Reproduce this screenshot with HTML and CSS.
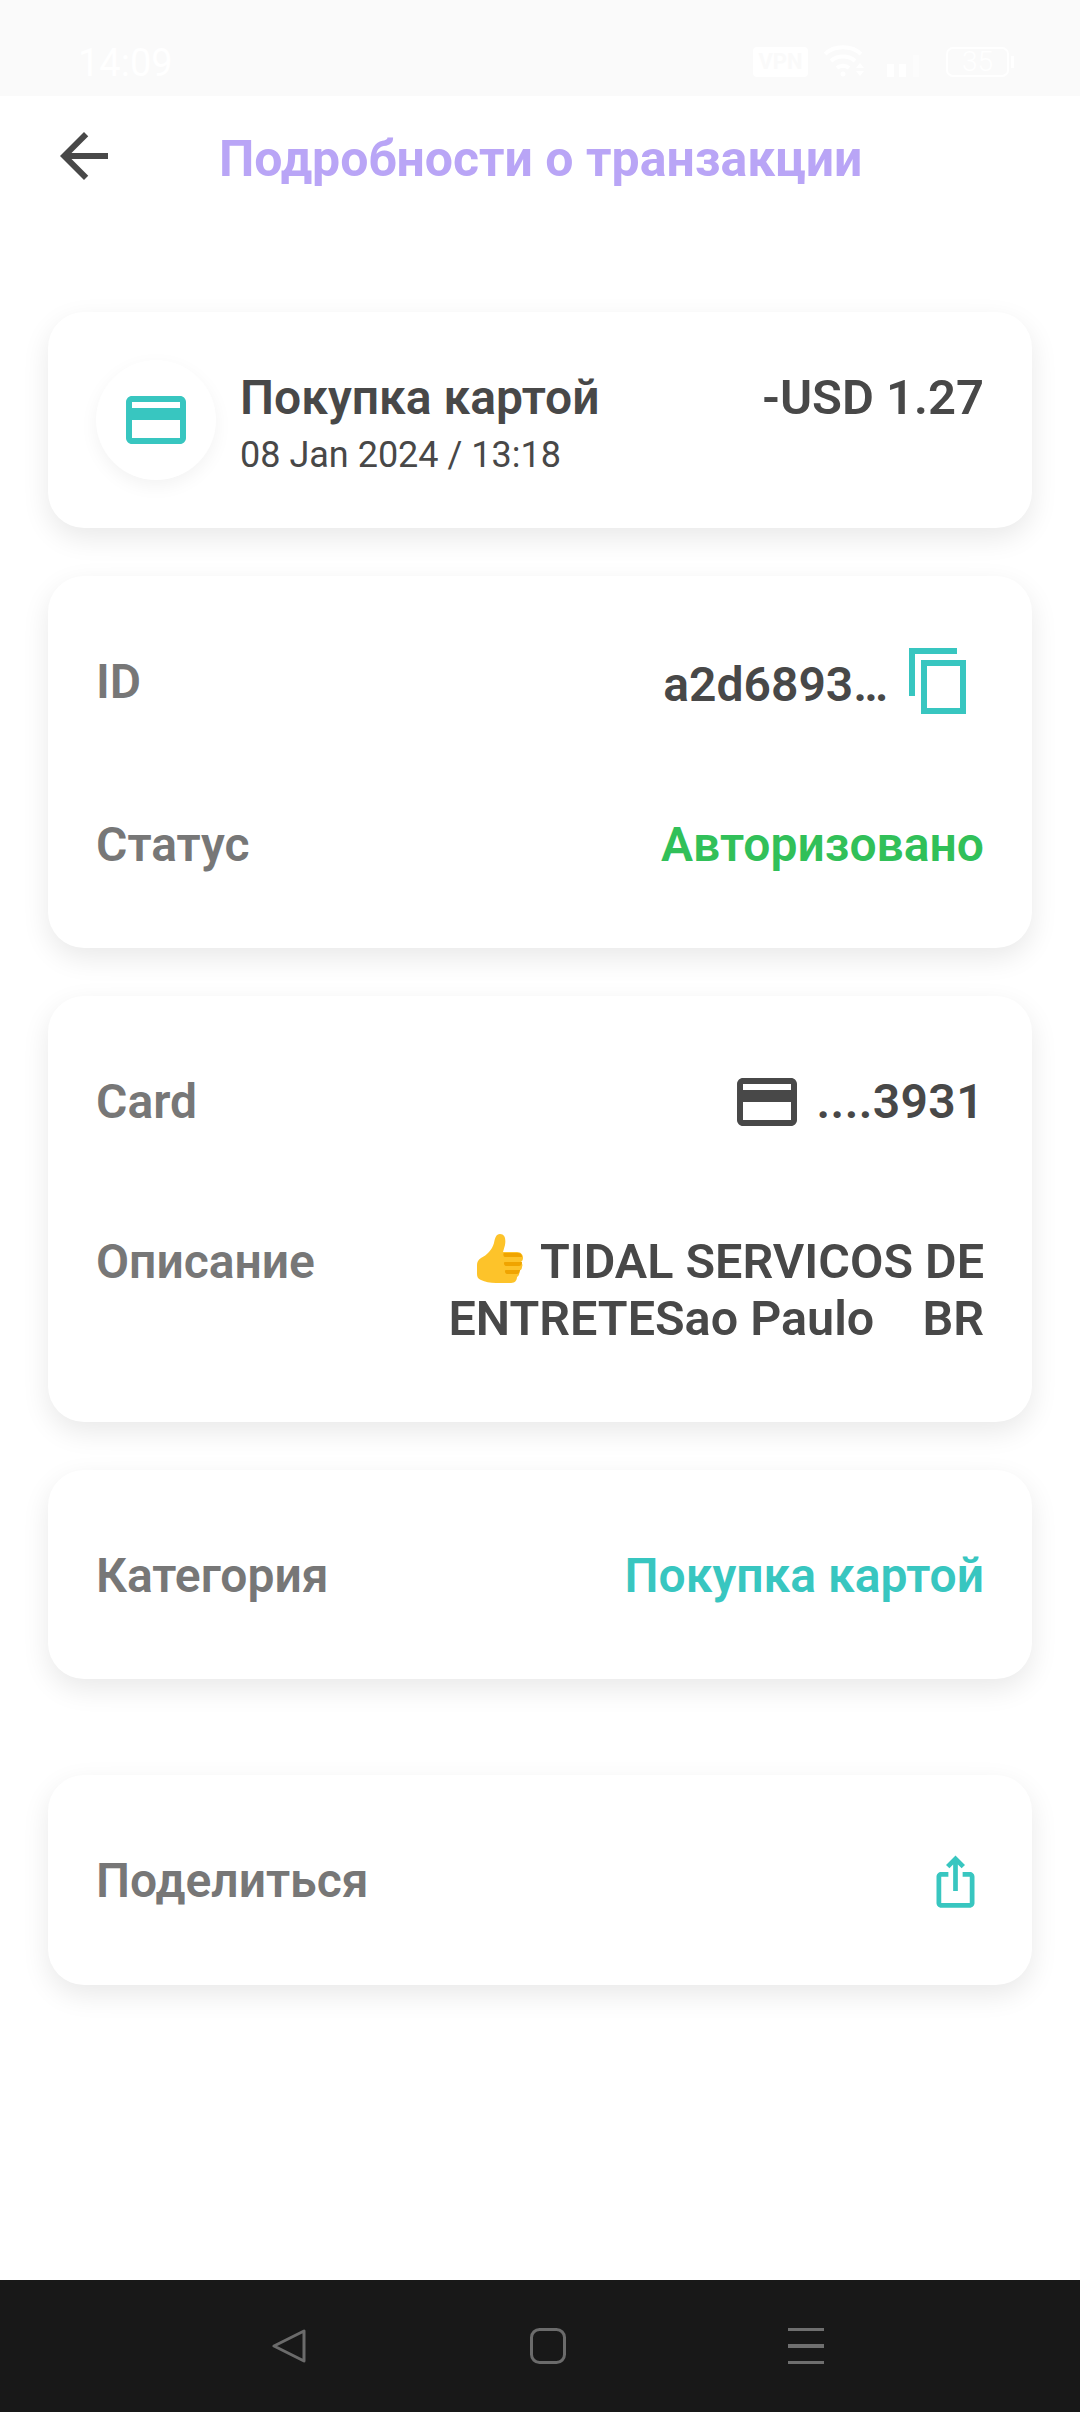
FILE: index.html
```html
<!DOCTYPE html>
<html>

<head>
    <meta charset='utf-8'>
    <title>Подробности о транзакции</title>
    <meta name='viewport' content='width=device-width, initial-scale=1'>
    <link rel="stylesheet" href="styles.css">
</head>

<body>
    <div class="status-bar">
        <span class="status-time">14:09</span>
        <div class="status-icons">
            <span class="vpn-badge">VPN</span>
            <svg class="wifi-icon" width="44" height="32" viewBox="0 0 44 32" fill="none" stroke="#fff" stroke-width="4">
                <path d="M2 9c9-9 27-9 36 0" />
                <path d="M8 16c6-6 18-6 24 0" />
                <path d="M14 23c3-3 9-3 12 0" />
                <circle cx="20" cy="29" r="2.5" fill="#fff" stroke="none" />
                <path d="M33 23l4-5 4 5zM33 26l4 5 4-5z" fill="#fff" stroke="none" />
            </svg>
            <svg class="signal-icon" width="42" height="30" viewBox="0 0 42 30" fill="#fff">
                <rect x="0" y="17" width="7" height="13" />
                <rect x="12" y="17" width="7" height="13" />
                <rect x="26" y="8" width="6" height="22" opacity=".35" />
                <rect x="37" y="0" width="5" height="30" opacity=".15" />
            </svg>
            <div class="battery">
                <span class="battery-body">35</span>
                <span class="battery-cap"></span>
            </div>
        </div>
    </div>

    <header class="top-bar">
        <svg class="back-icon" width="72" height="72" viewBox="0 0 24 24" fill="#484848">
            <path d="M20 11H7.83l5.59-5.59L12 4l-8 8 8 8 1.41-1.41L7.83 13H20v-2z" />
        </svg>
        <h1 class="page-title">Подробности о транзакции</h1>
    </header>

    <main class="content">
        <section class="card card-summary">
            <div class="circle-icon">
                <svg width="72" height="72" viewBox="0 0 24 24" fill="#38c6c0">
                    <path d="M20 4H4c-1.11 0-1.99.89-1.99 2L2 18c0 1.11.89 2 2 2h16c1.11 0 2-.89 2-2V6c0-1.11-.89-2-2-2zm0 14H4v-6h16v6zm0-10H4V6h16v2z" />
                </svg>
            </div>
            <div class="summary-text">
                <div class="summary-title">Покупка картой</div>
                <div class="summary-date">08 Jan 2024 / 13:18</div>
            </div>
            <div class="summary-amount">-USD 1.27</div>
        </section>

        <section class="card">
            <div class="row">
                <span class="label">ID</span>
                <span class="value value-icon">
                    <span class="id-text">a2d6893…</span>
                    <svg class="copy-icon" width="72" height="72" viewBox="0 0 24 24" fill="#38c6c0">
                        <path d="M16 1H2v16h2V3h14V1zm5 4H6v18h15V5zm-2 16H8V7h11v14z" />
                    </svg>
                </span>
            </div>
            <div class="row">
                <span class="label">Статус</span>
                <span class="value green">Авторизовано</span>
            </div>
        </section>

        <section class="card">
            <div class="row">
                <span class="label">Card</span>
                <span class="value value-icon">
                    <svg class="small-card" width="72" height="72" viewBox="0 0 24 24" fill="#484848">
                        <path d="M20 4H4c-1.11 0-1.99.89-1.99 2L2 18c0 1.11.89 2 2 2h16c1.11 0 2-.89 2-2V6c0-1.11-.89-2-2-2zm0 14H4v-6h16v6zm0-10H4V6h16v2z" />
                    </svg>
                    <span class="card-number">....3931</span>
                </span>
            </div>
            <div class="row row-top">
                <span class="label">Описание</span>
                <span class="value description"><svg class="thumb" width="48" height="52" viewBox="0 0 48 52">
                        <path fill="#fdc32a" d="M24 0c5 0 6 5 5 11l-2 7h14c4 0 6 3 6 6 0 2-1 3-2 4 1 1 2 3 1 5 0 2-1 3-3 4 1 2 0 5-2 6 0 3-2 6-6 6H20c-6 0-11-1-15-3-3-1-4-3-4-6V31c0-3 1-5 4-7 6-3 11-8 13-15 1-5 2-9 6-9z" />
                        <path fill="#f0a400" d="M28 19h14c3 0 4 2 4 4h-17c-2 0-2-4-1-4zM29 28h17c0 2-1 4-3 4H30c-2 0-3-4-1-4zM30 36h14c0 3-2 4-3 4H31c-2 0-3-4-1-4z" />
                    </svg> TIDAL SERVICOS DE ENTRETESao Paulo    BR</span>
            </div>
        </section>

        <section class="card">
            <div class="row">
                <span class="label">Категория</span>
                <span class="value teal">Покупка картой</span>
            </div>
        </section>

        <section class="card card-share">
            <div class="row">
                <span class="label">Поделиться</span>
                <svg width="57" height="57" viewBox="0 0 24 24" fill="#38c6c0">
                    <path d="M16 5l-1.42 1.42-1.59-1.59V16h-1.98V4.83L9.42 6.42 8 5l4-4 4 4zm4 5v11c0 1.1-.9 2-2 2H6c-1.11 0-2-.9-2-2V10c0-1.11.89-2 2-2h3v2H6v11h12V10h-3V8h3c1.1 0 2 .89 2 2z" />
                </svg>
            </div>
        </section>
    </main>

    <nav class="nav-bar">
        <svg width="36" height="36" viewBox="0 0 36 36" fill="none" stroke="#6b6b6b" stroke-width="3" stroke-linejoin="round">
            <path d="M32 3v30L2 18z" />
        </svg>
        <svg width="36" height="36" viewBox="0 0 36 36" fill="none" stroke="#6b6b6b" stroke-width="3">
            <rect x="1.5" y="1.5" width="33" height="33" rx="8" />
        </svg>
        <svg width="36" height="36" viewBox="0 0 36 36" fill="#6f6f6f">
            <rect y="0" width="36" height="3" />
            <rect y="16" width="36" height="4" />
            <rect y="33" width="36" height="3" />
        </svg>
    </nav>
</body>

</html>
```

FILE: styles.css
```css
html,
body {
    width: 1080px;
    height: 2412px;
    margin: 0;
    padding: 0;
    background: #fff;
    font-family: Roboto, "Liberation Sans", sans-serif;
    color: #484848;
    overflow: hidden;
}

body {
    display: flex;
    flex-direction: column;
}

/* status bar, white on almost white */
.status-bar {
    height: 96px;
    box-sizing: border-box;
    padding: 47px 66px 0 78px;
    display: flex;
    justify-content: space-between;
    align-items: flex-start;
    background: #fafafa;
    color: #fff;
}

.status-time {
    font-size: 38px;
    line-height: 32px;
}

.status-icons {
    display: flex;
    align-items: flex-start;
    gap: 17px;
}

.vpn-badge {
    width: 55px;
    height: 30px;
    border-radius: 4px;
    background: #fff;
    color: #fafafa;
    font-size: 22px;
    font-weight: 700;
    line-height: 30px;
    text-align: center;
}

.wifi-icon {
    margin: -2px 3px 0 -2px;
}

.battery {
    display: flex;
    align-items: center;
    gap: 2px;
}

.battery-body {
    width: 63px;
    height: 30px;
    box-sizing: border-box;
    border: 2px solid #fff;
    border-radius: 7px;
    font-size: 28px;
    font-weight: 300;
    line-height: 26px;
    text-align: center;
}

.battery-cap {
    width: 3px;
    height: 12px;
    background: #fff;
}

/* header */
.top-bar {
    height: 120px;
    display: flex;
    align-items: center;
    padding-left: 48px;
}

.page-title {
    margin: 0 0 0 99px;
    padding-top: 6px;
    font-size: 50px;
    font-weight: 700;
    color: #b9a5f6;
}

/* cards */
.content {
    padding: 96px 48px 0;
    display: flex;
    flex-direction: column;
    gap: 48px;
}

.card {
    background: #fff;
    border-radius: 36px;
    box-shadow: 0 10px 28px rgba(0, 0, 0, 0.09);
    padding: 77px 48px 74px;
    display: flex;
    flex-direction: column;
    gap: 105px;
}

.card-summary {
    padding: 48px;
    flex-direction: row;
    gap: 0;
    align-items: flex-start;
}

.circle-icon {
    width: 120px;
    height: 120px;
    border-radius: 50%;
    background: #fff;
    box-shadow: 0 6px 18px rgba(0, 0, 0, 0.05);
    display: flex;
    align-items: center;
    justify-content: center;
    flex-shrink: 0;
}

.summary-text {
    margin-left: 24px;
    flex: 1;
}

.summary-title {
    margin-top: 11px;
    font-size: 48px;
    font-weight: 600;
    line-height: 54px;
}

.summary-date {
    margin-top: 6px;
    font-size: 36px;
    line-height: 48px;
}

.summary-amount {
    margin-top: 11px;
    font-size: 49px;
    font-weight: 600;
    line-height: 54px;
}

.card-share {
    margin-top: 48px;
    padding-bottom: 75px;
}

.row {
    display: flex;
    justify-content: space-between;
    align-items: center;
    min-height: 58px;
}

.row-top {
    align-items: flex-start;
    margin: -3px 0 1px;
}

.label,
.value {
    font-size: 48px;
    font-weight: 600;
    line-height: 58px;
}

.label {
    color: #777;
}

.value {
    text-align: right;
}

.value-icon {
    display: flex;
    align-items: center;
    height: 58px;
}

.id-text {
    padding-top: 5px;
}

.copy-icon {
    margin: -2px 9px 0 15px;
}

.small-card {
    margin-right: 14px;
}

.card-number {
    letter-spacing: 0.4px;
}

.green {
    color: #31c059;
}

.teal {
    color: #38c6c0;
}

.description {
    width: 560px;
    font-size: 48.5px;
    line-height: 57px;
    white-space: pre-wrap;
}

.thumb {
    margin-right: 5px;
    vertical-align: -8px;
}

/* android buttons */
.nav-bar {
    margin-top: auto;
    height: 132px;
    box-sizing: border-box;
    padding: 0 0 0 16px;
    background: #181818;
    display: flex;
    align-items: center;
    justify-content: center;
    gap: 222px;
}
```
